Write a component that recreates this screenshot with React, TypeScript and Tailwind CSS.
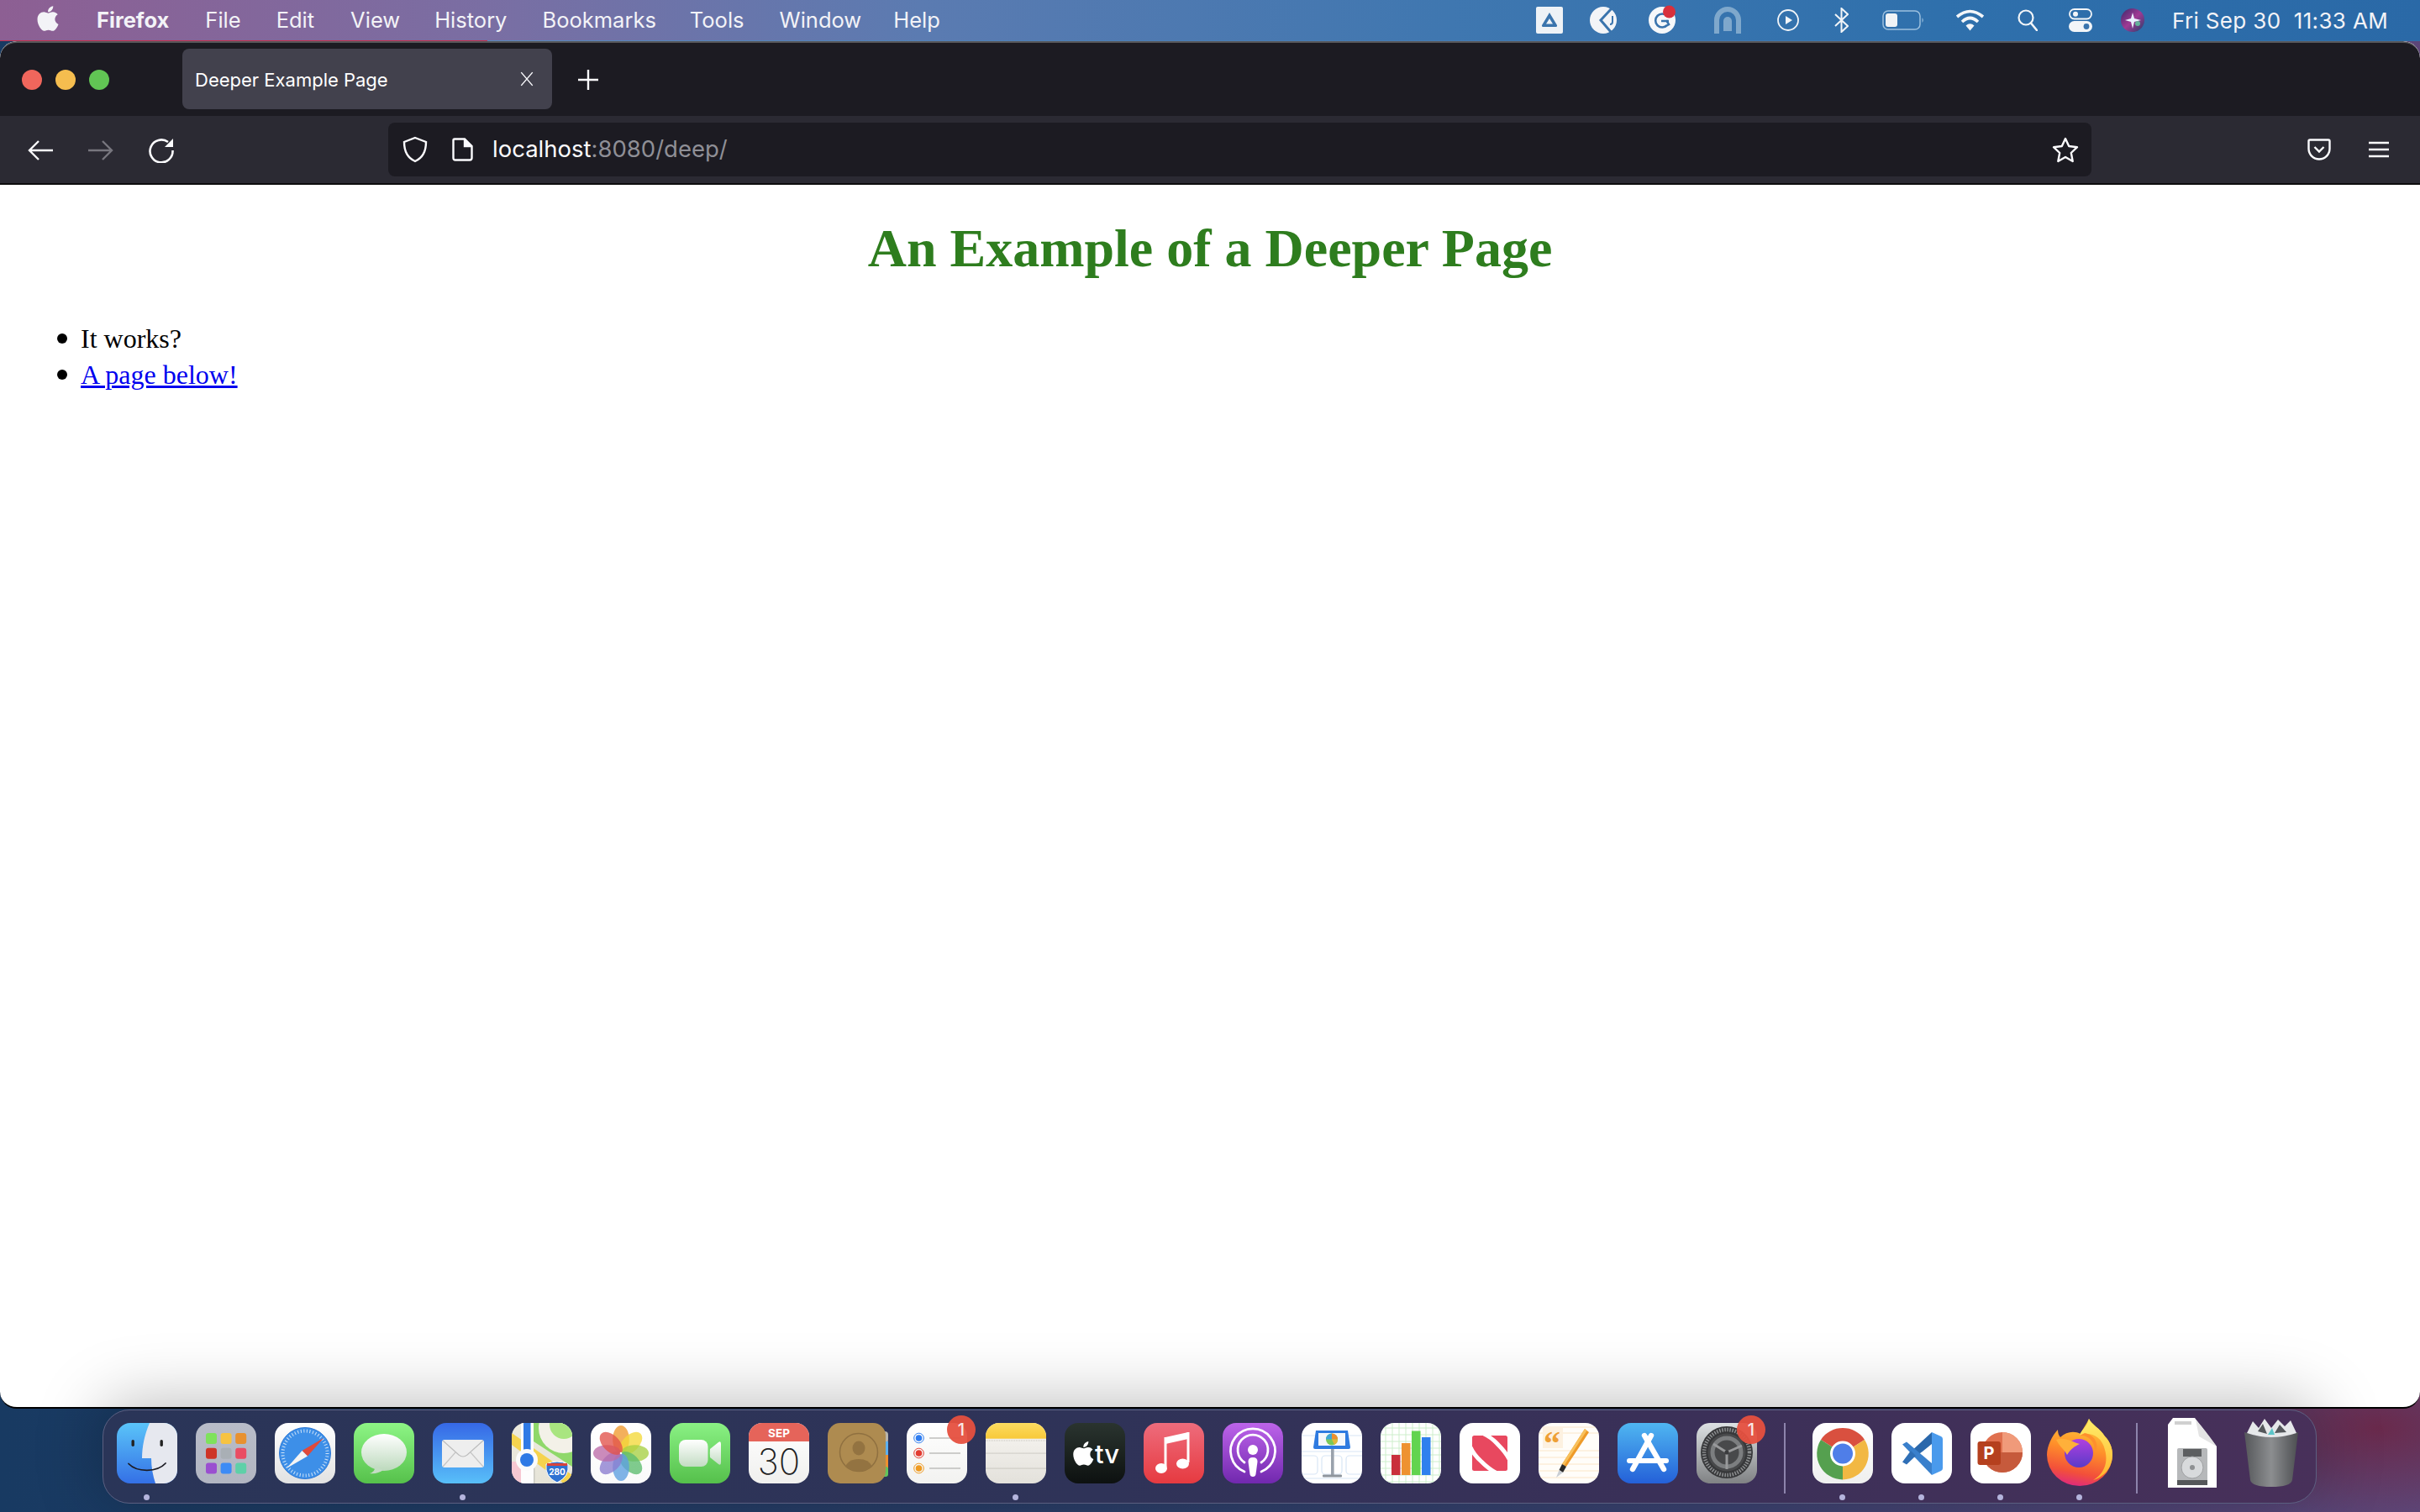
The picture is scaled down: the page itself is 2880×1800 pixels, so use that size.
import React from 'react';

const APPLE = 'M318.7 268.7c-.2-36.7 16.4-64.4 50-84.8-18.8-26.9-47.2-41.7-84.7-44.6-35.5-2.8-74.3 20.7-88.5 20.7-15 0-49.4-19.7-76.4-19.7C63.3 141.2 4 184.8 4 273.5q0 39.3 14.4 81.2c12.8 36.7 59 126.7 107.2 125.2 25.2-.6 43-17.9 75.8-17.9 31.8 0 48.3 17.9 76.4 17.9 48.6-.7 90.4-82.5 102.6-119.3-65.2-30.7-61.7-90-61.7-91.9zm-56.6-164.2c27.3-32.4 24.8-61.9 24-72.5-24.1 1.4-52 16.4-67.9 34.9-17.5 19.8-27.8 44.3-25.6 71.9 26.1 2 49.9-11.4 69.5-34.3z';

// rounded app tile, everything inside is clipped to it
function Tile({ id, from, to, children }: { id: string; from: string; to: string; children?: React.ReactNode }) {
  return (
    <svg viewBox="0 0 72 72" className="block w-[72px] h-[72px]">
      <defs>
        <linearGradient id={`g-${id}`} x1="0" y1="0" x2="0" y2="1">
          <stop offset="0" stopColor={from} />
          <stop offset="1" stopColor={to} />
        </linearGradient>
        <clipPath id={`c-${id}`}>
          <rect width="72" height="72" rx="16" />
        </clipPath>
      </defs>
      <g clipPath={`url(#c-${id})`}>
        <rect width="72" height="72" fill={`url(#g-${id})`} />
        {children}
      </g>
    </svg>
  );
}

const Finder = () => (
  <Tile id="finder" from="#5ac4f9" to="#3470e6">
    <path d="M39 0 C33 14 30 28 30 42 H41 C41 53 43 63 46 72 H72 V0Z" fill="#e6e8ef" />
    <rect x="17.5" y="20" width="3.4" height="8" rx="1.7" fill="#222" />
    <rect x="51.5" y="20" width="3.4" height="8" rx="1.7" fill="#222" />
    <path d="M14 48.5 C24 59 48 59 58 48" fill="none" stroke="#1c1c24" strokeWidth="1.8" strokeLinecap="round" />
  </Tile>
);

const Launchpad = () => {
  const c = ['#7ee25c', '#f7c342', '#e89130', '#ce3427', '#a9afb5', '#ea4c63', '#9a4fd0', '#3d8bf5', '#5ed0a8'];
  return (
    <Tile id="lp" from="#b8bcc8" to="#b2b6c2">
      {c.map((f, i) => (
        <rect key={f} x={12 + (i % 3) * 17.6} y={12 + Math.floor(i / 3) * 17.8} width="13" height="13" rx="3" fill={f} />
      ))}
    </Tile>
  );
};

const Safari = () => (
  <Tile id="safari" from="#ffffff" to="#e2e2e2">
    <circle cx="36" cy="36" r="30.5" fill="#3d8fe8" stroke="#2f78d4" strokeWidth="1" />
    <circle cx="36" cy="36" r="26.5" fill="none" stroke="#cfe3f8" strokeWidth="4" strokeDasharray="1 2.6" />
    <polygon points="58,18 32.5,33 39,39.5" fill="#e0493a" />
    <polygon points="14,54 32.5,33 39,39.5" fill="#f4f4f4" />
  </Tile>
);

const Messages = () => (
  <Tile id="msg" from="#8df585" to="#56c14b">
    <defs>
      <linearGradient id="msg-b" x1="0" y1="0" x2="0" y2="1">
        <stop offset="0" stopColor="#ffffff" />
        <stop offset="1" stopColor="#bcd9bc" />
      </linearGradient>
    </defs>
    <ellipse cx="36" cy="35" rx="27" ry="22" fill="url(#msg-b)" />
    <path d="M26 52 C25 56 23 59 19 60 C25 61 31 59 35 56Z" fill="#c4dcc4" />
  </Tile>
);

const Mail = () => (
  <Tile id="mail" from="#3668e6" to="#58bff9">
    <rect x="11" y="20" width="50" height="33" rx="3" fill="#eeeeee" />
    <path d="M12 21 L31 38 Q36 42 41 38 L60 21" fill="none" stroke="#bdbdbd" strokeWidth="1.2" />
    <path d="M12 52 L27 35 M60 52 L45 35" fill="none" stroke="#c6c6c6" strokeWidth="1.2" />
  </Tile>
);

const Maps = () => (
  <Tile id="maps" from="#eceade" to="#e6e4d8">
    <path d="M26 0 H72 V52 L26 22 Z" fill="#8fd86a" />
    <circle cx="62" cy="6" r="30" fill="#f3f1e8" />
    <circle cx="62" cy="2" r="17" fill="#a9e580" />
    <path d="M0 12 L72 62 V72 H62 L0 26Z" fill="#f5d34e" />
    <rect x="0" y="46" width="11" height="26" fill="#f7c8d2" />
    <rect x="11" y="0" width="15" height="72" fill="#fdfdfd" />
    <rect x="26" y="46" width="1.5" height="26" fill="#c9c9c2" />
    <rect x="14" y="0" width="8.5" height="36" fill="#2f7ae5" />
    <circle cx="18" cy="44" r="13" fill="#fbfbfb" />
    <circle cx="18" cy="44" r="8" fill="#2f7ae5" />
    <path d="M41 49 Q54 43 67 49 Q69 64 54 71 Q39 64 41 49Z" fill="#2f72d2" stroke="#fff" strokeWidth="1" />
    <rect x="42" y="48" width="24" height="3" fill="#d9433a" />
    <text x="54" y="62" textAnchor="middle" fontSize="10" fontWeight="700" fill="#fff" fontFamily="Inter, sans-serif">280</text>
  </Tile>
);

const Photos = () => {
  const petals = ['#f09a2e', '#f3d83a', '#a6cf42', '#5cbd6e', '#5c9fe0', '#8a7ccf', '#bd6aa8', '#e2524a'];
  return (
    <Tile id="photos" from="#ffffff" to="#fafafa">
      {petals.map((f, i) => (
        <ellipse key={f} cx="36" cy="19.5" rx="9.8" ry="16.5" fill={f} fillOpacity="0.78" transform={`rotate(${i * 45} 36 36)`} />
      ))}
      <circle cx="36" cy="36" r="1.3" fill="#fff" />
    </Tile>
  );
};

const FaceTime = () => (
  <Tile id="ft" from="#8af184" to="#55c04b">
    <defs>
      <linearGradient id="ft-b" x1="0" y1="0" x2="0" y2="1">
        <stop offset="0" stopColor="#ffffff" />
        <stop offset="1" stopColor="#c3dcc3" />
      </linearGradient>
    </defs>
    <rect x="11" y="20" width="34.5" height="32" rx="8" fill="url(#ft-b)" />
    <path d="M48 31 L58 23 Q61 21 61 25 V47 Q61 51 58 49 L48 41 Q47.5 36 48 31Z" fill="url(#ft-b)" />
  </Tile>
);

const Calendar = () => (
  <Tile id="cal" from="#ffffff" to="#f0f0ee">
    <rect width="72" height="22" fill="#e5645a" />
    <text x="36" y="17" textAnchor="middle" fontSize="13.5" fontWeight="700" fill="#fff" fontFamily="Inter, sans-serif">SEP</text>
    <text x="36" y="61" textAnchor="middle" fontSize="42" fontWeight="200" fill="#222" fontFamily="Inter, sans-serif">30</text>
  </Tile>
);

const Contacts = () => (
  <div className="relative w-[72px] h-[72px]">
    <svg viewBox="0 0 72 72" className="block w-[72px] h-[72px]">
      <rect x="58" y="10" width="14" height="14" rx="4" fill="#b9b5ad" />
      <rect x="62" y="22" width="10" height="16" fill="#5cb0f0" />
      <rect x="62" y="38" width="10" height="16" fill="#ee9030" />
      <rect x="62" y="52" width="10" height="12" rx="3" fill="#62c45c" />
      <rect width="69" height="72" rx="15" fill="#ae8b50" />
      <circle cx="37" cy="35" r="22.5" fill="none" stroke="#8f7040" strokeWidth="1.5" />
      <ellipse cx="37" cy="30" rx="7.5" ry="8.5" fill="#937341" />
      <path d="M21 52 Q25 43 37 43 Q49 43 53 52 Q46 57.5 37 57.5 Q28 57.5 21 52Z" fill="#937341" />
    </svg>
  </div>
);

const Reminders = () => (
  <Tile id="rem" from="#ffffff" to="#f2f2f0">
    {[['#2f7df0', 18], ['#e23c32', 36], ['#ef9a20', 54]].map(([f, y]) => (
      <g key={String(f)}>
        <circle cx="14.5" cy={y} r="5.8" fill="none" stroke={String(f)} strokeWidth="1" />
        <circle cx="14.5" cy={y} r="3.8" fill={String(f)} />
        <rect x="27" y={Number(y) - 0.8} width="37" height="1.6" fill="#c2c2c0" />
      </g>
    ))}
  </Tile>
);

const Notes = () => (
  <Tile id="notes" from="#f8f6f2" to="#e3e1db">
    <defs>
      <linearGradient id="notes-t" x1="0" y1="0" x2="0" y2="1">
        <stop offset="0" stopColor="#fcdc60" />
        <stop offset="1" stopColor="#f8c93a" />
      </linearGradient>
    </defs>
    <rect width="72" height="18.7" fill="url(#notes-t)" />
    <line x1="0" y1="21" x2="72" y2="21" stroke="#c4c2bc" strokeWidth="1" strokeDasharray="1 1" />
    <rect y="35.5" width="72" height="1.2" fill="#d2d0ca" />
    <rect y="53.5" width="72" height="1.2" fill="#cfcdc7" />
  </Tile>
);

const AppleTv = () => (
  <Tile id="tv" from="#2a342f" to="#0d1110">
    <path d={APPLE} fill="#fff" transform="translate(10 20) scale(0.064)" />
    <text x="36" y="48" fontSize="31" fontWeight="500" fill="#fff" fontFamily="Inter, sans-serif">tv</text>
  </Tile>
);

const Music = () => (
  <Tile id="music" from="#ee6c7c" to="#e63a40">
    <path d="M26 25 L53 19 V11 L26 17 Z" fill="#fff" />
    <path d="M26 17 V52 M53 11 V47" stroke="#fff" strokeWidth="3" fill="none" />
    <ellipse cx="21" cy="54" rx="7" ry="6" fill="#fff" />
    <ellipse cx="46.5" cy="48.5" rx="7.5" ry="6" fill="#fff" />
  </Tile>
);

const Podcasts = () => (
  <Tile id="pod" from="#bd64ea" to="#7128ae">
    <path d="M26 58 A26.5 26.5 0 1 1 46 58" fill="none" stroke="#fff" strokeWidth="2.8" strokeLinecap="round" />
    <path d="M26 47 A18 18 0 1 1 46 47" fill="none" stroke="#fff" strokeWidth="2.8" strokeLinecap="round" />
    <circle cx="36" cy="32" r="6" fill="#fff" />
    <path d="M30.5 46 Q30.5 41 36 41 Q41.5 41 41.5 46 L39.5 61 Q39 64 36 64 Q33 64 32.5 61Z" fill="#fff" />
  </Tile>
);

const Keynote = () => (
  <Tile id="key" from="#ffffff" to="#ffffff">
    <g fill="none" stroke="#d8e6f5" strokeWidth="1.2">
      <rect x="-8" y="39" width="27" height="22" rx="4" />
      <rect x="24" y="39" width="24" height="22" rx="4" />
      <rect x="53" y="39" width="28" height="22" rx="4" />
      <path d="M0 15 H72 M0 34 H72 M0 66 H72" />
    </g>
    <rect x="35" y="29" width="3.6" height="33" fill="#9aa2ac" />
    <rect x="25" y="61.5" width="23" height="3" rx="1" fill="#8f969e" />
    <path d="M17 9 H55 L58 29 Q58 31 56 31 H16 Q14 31 14 29Z" fill="#2f7be0" />
    <rect x="20" y="12" width="32" height="15" fill="#f4f7fb" />
    <circle cx="36" cy="19.5" r="7" fill="#7ac85a" />
    <path d="M36 19.5 V12.5 A7 7 0 0 1 43 19.5Z" fill="#ef8f2f" />
    <path d="M36 19.5 H43 A7 7 0 0 1 39 26Z" fill="#e2b93a" />
    <path d="M36 19.5 V12.5 A7 7 0 0 0 29 19.5Z" fill="#3fa6d8" />
  </Tile>
);

const NumbersApp = () => {
  const lines = [6, 14, 22, 30, 38, 46, 54, 62, 70];
  return (
    <Tile id="num" from="#ffffff" to="#ffffff">
      <g stroke="#cdeecb" strokeWidth="1">
        {lines.map((n) => (
          <g key={n}>
            <line x1={n} y1="0" x2={n} y2="72" />
            <line x1="0" y1={n} x2="72" y2={n} />
          </g>
        ))}
      </g>
      <rect x="13" y="38" width="10.5" height="24" fill="#c9303c" />
      <rect x="25" y="24" width="10.5" height="38" fill="#ee9230" />
      <rect x="37" y="9.5" width="10.5" height="52.5" fill="#62d44f" />
      <rect x="49" y="17" width="10.5" height="45" fill="#2f80ee" />
    </Tile>
  );
};

const News = () => (
  <Tile id="news" from="#ffffff" to="#ffffff">
    <rect x="15" y="15" width="42" height="42" rx="2.5" fill="#e8485f" />
    <path d="M29 13 Q38 17 46 26 Q55 35 59 43" fill="none" stroke="#fff" strokeWidth="5" />
    <path d="M13 29 Q17 38 26 46 Q35 55 43 59" fill="none" stroke="#fff" strokeWidth="5" />
  </Tile>
);

const Pages = () => (
  <Tile id="pages" from="#fffdf9" to="#fffdf9">
    <g stroke="#fbe6c8" strokeWidth="1">
      {[5, 12, 33, 41, 49, 57, 65].map((y) => (
        <line key={y} x1="0" y1={y} x2="72" y2={y} />
      ))}
    </g>
    <rect x="5" y="6" width="24" height="24" fill="#fdf1e0" />
    <text x="6" y="38" fontSize="40" fontWeight="700" fill="#ee9f35" fontFamily="Liberation Serif, serif">“</text>
    <path d="M55 7 L60 11 L33 52 L28 49Z" fill="#ee9a28" />
    <path d="M55 7 L57.5 9 L30.5 50.5 L28 49Z" fill="#f8c15c" />
    <path d="M28 49 L33 52 L29 59 L24.5 56Z" fill="#2a2a2a" />
    <path d="M24.5 56 L29 59 L21 65Z" fill="#c9ced4" />
  </Tile>
);

const AppStore = () => (
  <Tile id="as" from="#4fb6f1" to="#2460d8">
    <g stroke="#fff" strokeWidth="6.4" strokeLinecap="round">
      <line x1="32" y1="15" x2="55" y2="55" />
      <line x1="40" y1="15" x2="18" y2="55" />
    </g>
    <line x1="14" y1="45" x2="58" y2="45" stroke="#fff" strokeWidth="6" strokeLinecap="round" />
  </Tile>
);

const Settings = () => (
  <Tile id="set" from="#dde1e3" to="#808284">
    <circle cx="36" cy="35" r="31" fill="#37383a" />
    <circle cx="36" cy="35" r="27" fill="none" stroke="#8d8f91" strokeWidth="4.5" strokeDasharray="1.5 1.6" />
    <circle cx="36" cy="35" r="22.5" fill="#48494b" />
    <circle cx="36" cy="35" r="17" fill="none" stroke="#7c7e80" strokeWidth="5" />
    <g stroke="#98999b" strokeWidth="3">
      <line x1="36" y1="35" x2="54" y2="27" />
      <line x1="36" y1="35" x2="20" y2="25" />
      <line x1="36" y1="35" x2="36" y2="55" />
    </g>
    <circle cx="36" cy="35" r="2.6" fill="#3a3b3d" />
  </Tile>
);

const Chrome = () => (
  <Tile id="chrome" from="#ffffff" to="#efefef">
    <path d="M36 36.5 L62 20 A31 31 0 0 0 10 20Z" fill="#d9503f" />
    <path d="M36 36.5 L62 20 A31 31 0 0 1 36 67.5Z" fill="#f2b843" />
    <path d="M36 36.5 L36 67.5 A31 31 0 0 1 10 20Z" fill="#55a04f" />
    <circle cx="36" cy="36.5" r="15" fill="#fff" />
    <circle cx="36" cy="36.5" r="12" fill="#4f7ee8" />
  </Tile>
);

const VsCode = () => (
  <Tile id="code" from="#ffffff" to="#ffffff">
    <path d="M48 11 L22 35 L28 41 L48 25Z" fill="#2a67ab" />
    <path d="M13 25.5 L18 22.5 L48 48 V62 Z" fill="#3a80cc" />
    <path d="M13 46.5 L18 49.5 L29 39 L23 33Z" fill="#2f6fb6" />
    <path d="M48 11 L59 16 Q61 17 61 19 V54 Q61 56 59 57 L48 62Z" fill="#4a9aec" />
  </Tile>
);

const PowerPoint = () => (
  <Tile id="ppt" from="#ffffff" to="#ffffff">
    <circle cx="38" cy="35" r="24" fill="#e0704f" />
    <path d="M38 35 V11 A24 24 0 0 1 62 35Z" fill="#f09a7a" />
    <path d="M14 35 H62 A24 24 0 0 1 14 35Z" fill="#c65a3c" />
    <rect x="8.5" y="22" width="27.5" height="28" rx="3" fill="#b5401e" />
    <text x="22" y="43" textAnchor="middle" fontSize="20" fontWeight="700" fill="#fff" fontFamily="Inter, sans-serif">P</text>
  </Tile>
);

const Firefox = () => (
  <svg viewBox="-4 -6 80 82" className="absolute left-[-4px] top-[-6px] w-[80px] h-[82px] overflow-visible">
    <defs>
      <linearGradient id="ff-a" x1="0.6" y1="0" x2="0.4" y2="1">
        <stop offset="0" stopColor="#ffd23c" />
        <stop offset="0.45" stopColor="#ff8f2a" />
        <stop offset="0.8" stopColor="#f2503a" />
        <stop offset="1" stopColor="#e02a7c" />
      </linearGradient>
      <linearGradient id="ff-p" x1="0.5" y1="0" x2="0.5" y2="1">
        <stop offset="0" stopColor="#b040e0" />
        <stop offset="1" stopColor="#5a3bc8" />
      </linearGradient>
      <linearGradient id="ff-y" x1="0.5" y1="0" x2="0.5" y2="1">
        <stop offset="0" stopColor="#ffee6a" />
        <stop offset="1" stopColor="#ffb42c" />
      </linearGradient>
    </defs>
    <path d="M-3 38 C-3 28 3 15 10 8 C10 12 11 15 13 17 C20 10 30 9 37 13 C40 6 44 2 47 -5 C50 2 60 6 66 16 C72 22 75 30 75 38 A39 37 0 0 1 -3 38Z" fill="url(#ff-a)" />
    <path d="M47 -5 C46 4 36 10 36 15 C46 10 62 14 66 32 C70 46 66 60 52 68 C66 64 75 52 75 38 C75 30 72 22 66 16 C60 6 50 2 47 -5Z" fill="url(#ff-y)" />
    <circle cx="35" cy="36" r="17" fill="url(#ff-p)" />
    <path d="M8 20 C18 16 26 22 36 25 C30 28 26 30 21 38 C18 32 12 28 8 20Z" fill="#ffb03a" />
    <path d="M36 15 C46 14 55 22 54 36 C60 26 54 14 42 12Z" fill="#ff8f2e" />
  </svg>
);

const DiskFile = () => (
  <svg viewBox="0 0 58 83" className="absolute left-[5px] top-[-6px] w-[58px] h-[83px] overflow-visible">
    <path d="M0 8 L6 0 H32 L58 34 V83 H0Z" fill="#fff" />
    <path d="M33 2 L37 22 L58 34 Q44 14 33 2Z" fill="#e4e4e4" />
    <path d="M8 4 H28 V8 H8Z" fill="#d0d0d0" />
    <rect x="11" y="36" width="36" height="44" rx="2" fill="#b6b8ba" />
    <rect x="18" y="37" width="22" height="9" fill="#5c5e60" />
    <circle cx="29" cy="59" r="13" fill="#d8dadc" stroke="#9ea0a2" strokeWidth="1" />
    <circle cx="29" cy="59" r="3" fill="#8e9092" />
    <rect x="11" y="74" width="36" height="6" fill="#55575a" />
  </svg>
);

const Trash = () => (
  <svg viewBox="0 0 64 82" className="absolute left-[2px] top-[-6px] w-[64px] h-[82px] overflow-visible">
    <defs>
      <linearGradient id="tr" x1="0" y1="0" x2="1" y2="0">
        <stop offset="0" stopColor="#55575a" />
        <stop offset="0.5" stopColor="#8c8e90" />
        <stop offset="1" stopColor="#4c4e51" />
      </linearGradient>
    </defs>
    <path d="M0 17 Q32 28 64 17 L57 74 Q55 82 32 82 Q9 82 7 74Z" fill="url(#tr)" />
    <path d="M3 18 L10 4 L17 12 L24 1 L32 12 L40 2 L48 10 L55 3 L62 18 Q32 28 3 18Z" fill="#e6e8ea" />
    <path d="M16 16 L22 7 L27 19Z M36 18 L42 8 L50 17Z" fill="#55585c" />
    <path d="M28 20 L33 12 L36 20Z" fill="#5cc4c8" />
  </svg>
);

function Slot({ running, badge, children }: { running?: boolean; badge?: boolean; children: React.ReactNode }) {
  return (
    <div className="relative w-[72px] h-[73px] shrink-0">
      {children}
      {badge && (
        <span className="absolute left-[48px] top-[-9px] w-[34px] h-[34px] rounded-full bg-[#e6503f]/95 flex items-center justify-center text-[20px] font-medium text-[#f8e9e6]">1</span>
      )}
      {running && <span className="absolute left-[32px] top-[85px] w-[7px] h-[7px] rounded-full bg-[#b4b4dc]" />}
    </div>
  );
}

function MenuIcons() {
  return (
    <>
      <svg viewBox="0 0 32 32" className="w-[32px] h-[32px] mr-[32px]">
        <rect width="32" height="32" rx="2" fill="#eef2f6" />
        <path d="M16 7 L25 22 Q25.5 24 23 24 H9 Q6.5 24 7 22Z M16 14 L12 20.5 H20Z" fill="#3a74ad" fillRule="evenodd" />
      </svg>
      <svg viewBox="0 0 32 32" className="w-[32px] h-[32px] mr-[38px]">
        <circle cx="16" cy="16" r="16" fill="#f2f4f7" />
        <path d="M26 2 L13 16 L25 30" fill="none" stroke="#3a74ad" strokeWidth="3" />
        <path d="M27 11 V18 Q27 21 24 21" fill="none" stroke="#3a74ad" strokeWidth="2" />
      </svg>
      <svg viewBox="0 0 34 34" className="w-[34px] h-[34px] mr-[44px] overflow-visible">
        <circle cx="16" cy="17" r="16" fill="#f6f8fa" />
        <path d="M22 12 A8 8 0 1 0 22 23 M15 18 H24 M19 25 L24 22 L21 17" fill="none" stroke="#3a74ad" strokeWidth="2.6" />
        <circle cx="24.5" cy="7" r="7.5" fill="#d8303c" />
      </svg>
      <svg viewBox="0 0 32 32" className="w-[32px] h-[32px] mr-[43px]">
        <path d="M3 32 V16 A13 13 0 0 1 29 16 V32" fill="none" stroke="#7fa8cc" strokeWidth="6" />
        <path d="M11 29 V17 A5 5 0 0 1 21 17 V29Z" fill="#7fa8cc" />
      </svg>
      <svg viewBox="0 0 26 26" className="w-[26px] h-[26px] mr-[42px]">
        <circle cx="13" cy="13" r="12" fill="none" stroke="#f2f5f8" strokeWidth="1.8" />
        <path d="M10 8 L18 13 L10 18Z" fill="#f2f5f8" />
      </svg>
      <svg viewBox="0 0 17 30" className="w-[17px] h-[30px] mr-[40px]">
        <path d="M1 8 L16 22 L8.5 29 V1 L16 8 L1 22" fill="none" stroke="#f2f5f8" strokeWidth="2" />
      </svg>
      <svg viewBox="0 0 50 24" className="w-[50px] h-[24px] mr-[37px]">
        <rect x="1" y="1" width="44" height="22" rx="6" fill="none" stroke="#9cc0de" strokeWidth="1.5" />
        <rect x="4" y="4" width="14" height="16" rx="3" fill="#f0f3f6" />
        <path d="M47.5 9 Q50 12 47.5 15Z" fill="#9cc0de" />
      </svg>
      <svg viewBox="0 0 35 26" className="w-[35px] h-[26px] mr-[39px]">
        <path d="M2 9 Q17.5 -4 33 9 M8 15 Q17.5 6 27 15" fill="none" stroke="#f4f6f9" strokeWidth="3.6" />
        <path d="M12.5 19.5 Q17.5 15 22.5 19.5 L17.5 25.5Z" fill="#f4f6f9" />
      </svg>
      <svg viewBox="0 0 24 26" className="w-[24px] h-[26px] mr-[37px]">
        <circle cx="10" cy="10" r="8.5" fill="none" stroke="#f2f5f8" strokeWidth="2.2" />
        <line x1="16" y1="16.5" x2="23" y2="25" stroke="#f2f5f8" strokeWidth="2.6" strokeLinecap="round" />
      </svg>
      <svg viewBox="0 0 28 28" className="w-[28px] h-[28px] mr-[34px]">
        <rect x="1" y="1" width="26" height="11.5" rx="5.7" fill="none" stroke="#f2f5f8" strokeWidth="1.8" />
        <circle cx="8" cy="6.7" r="3" fill="#f2f5f8" />
        <rect y="15" width="28" height="13" rx="6.5" fill="#f2f5f8" />
        <circle cx="21" cy="21.5" r="3.4" fill="#3a74ad" />
      </svg>
      <svg viewBox="0 0 28 28" className="w-[28px] h-[28px] mr-[33px]">
        <defs>
          <linearGradient id="siri" x1="0" y1="0" x2="1" y2="1">
            <stop offset="0" stopColor="#3a2a6a" />
            <stop offset="0.5" stopColor="#a03a94" />
            <stop offset="1" stopColor="#24406a" />
          </linearGradient>
        </defs>
        <circle cx="14" cy="14" r="14" fill="url(#siri)" />
        <path d="M14 5 L16 12 L24 14 L16 16 L14 24 L12 16 L5 14 L12 12Z" fill="#eaf2ff" />
        <circle cx="20" cy="18" r="3" fill="#5fd0a0" fillOpacity="0.8" />
      </svg>
    </>
  );
}

export default function App() {
  return (
    <div className="flex flex-col w-[2880px] h-[1800px] overflow-hidden font-['Inter',sans-serif] bg-[radial-gradient(220px_110px_at_2830px_1700px,#6a2a4c_0%,transparent_100%),linear-gradient(90deg,#183a62_0%,#2b3e68_45%,#3a4270_70%,#5c4678_100%)]">
      {/* menu bar */}
      <div className="flex items-center justify-between h-[48px] shrink-0 text-[25.5px] text-[#f3f3f7] bg-[linear-gradient(90deg,#8d5f93_0%,#7a6ea3_20%,#5b7bb1_38%,#3f77b0_60%,#2f70ac_80%,#2a69a7_100%)]">
        <div className="flex items-center">
          <svg viewBox="0 0 384 512" className="w-[28px] h-[34px] ml-[43px] mr-[44px] mb-[4px]" fill="#f3f3f7">
            <path d={APPLE} />
          </svg>
          <span className="font-bold mr-[43px]">Firefox</span>
          <span className="mr-[42px]">File</span>
          <span className="mr-[43px]">Edit</span>
          <span className="mr-[41px]">View</span>
          <span className="mr-[42px]">History</span>
          <span className="mr-[40px]">Bookmarks</span>
          <span className="mr-[42px]">Tools</span>
          <span className="mr-[38px]">Window</span>
          <span>Help</span>
        </div>
        <div className="flex items-center pr-[38px]">
          <MenuIcons />
          <span className="whitespace-pre text-[26px] tracking-[0.35px]">Fri Sep 30  11:33 AM</span>
        </div>
      </div>
      <div className="h-[1px] shrink-0 bg-[linear-gradient(90deg,#c0304f_0,#c0304f_580px,#5a88bd_580px,#2f6ea8_100%)]" />

      {/* browser window */}
      <div className="flex flex-col h-[1628px] shrink-0 rounded-[20px] overflow-hidden bg-white border-b-[2px] border-black">
        <div className="flex items-center h-[89px] shrink-0 bg-[#1c1b22] border-t-[2px] border-[#58585c] rounded-t-[20px]">
          <span className="w-[24px] h-[24px] rounded-full bg-[#f0665c] ml-[26px]" />
          <span className="w-[24px] h-[24px] rounded-full bg-[#f5bd4f] ml-[16px]" />
          <span className="w-[24px] h-[24px] rounded-full bg-[#61c554] ml-[16px]" />
          <div className="flex items-center justify-between w-[440px] h-[72px] ml-[87px] mt-[-2px] pl-[15px] pr-[21px] rounded-[8px] bg-[#42414d] text-[22px] text-white">
            <span className="pt-[3px]">Deeper Example Page</span>
            <svg viewBox="0 0 16 16" className="w-[18px] h-[18px]" fill="none" stroke="#fbfbfe" strokeWidth="1.3">
              <path d="M2 1 L14 15 M14 1 L2 15" />
            </svg>
          </div>
          <svg viewBox="0 0 24 24" className="w-[24px] h-[24px] ml-[31px]" fill="none" stroke="#fbfbfe" strokeWidth="2.4">
            <path d="M12 0 V24 M0 12 H24" />
          </svg>
        </div>
        <div className="flex items-center h-[80px] shrink-0 bg-[#2b2a33]">
          <svg viewBox="0 0 30 24" className="w-[30px] h-[24px] ml-[33px] mt-[2px]" fill="none" stroke="#fbfbfe" strokeWidth="2.4">
            <path d="M30 12 H2 M13 1 L2 12 L13 23" />
          </svg>
          <svg viewBox="0 0 30 24" className="w-[30px] h-[24px] ml-[42px] mt-[2px]" fill="none" stroke="#77767e" strokeWidth="2.4">
            <path d="M0 12 H28 M17 1 L28 12 L17 23" />
          </svg>
          <svg viewBox="0 0 30 30" className="w-[30px] h-[30px] ml-[42px] mt-[2px]" fill="none" stroke="#fbfbfe" strokeWidth="2.6">
            <path d="M23 5 A13.5 13.5 0 1 0 28.5 15" />
            <path d="M29 1 V11 H19Z" fill="#fbfbfe" stroke="none" />
          </svg>
          <div className="flex items-center justify-between w-[2027px] h-[64px] ml-[255px] rounded-[8px] bg-[#1c1b22] pl-[17px] pr-[15px]">
            <div className="flex items-center">
              <svg viewBox="0 0 30 32" className="w-[30px] h-[32px]" fill="none" stroke="#fbfbfe" strokeWidth="2.4">
                <path d="M15 2 L28 7 C28 18 24 26 15 30 C6 26 2 18 2 7Z" />
              </svg>
              <svg viewBox="0 0 25 28" className="w-[25px] h-[28px] ml-[29px]" fill="none" stroke="#fbfbfe" strokeWidth="2.4">
                <path d="M3 1.5 H15 L23.5 10 V24 Q23.5 26.5 21 26.5 H4 Q1.5 26.5 1.5 24 V3 Q1.5 1.5 3 1.5Z" />
                <path d="M15 1.5 V10 H23.5" fill="#fbfbfe" />
              </svg>
              <span className="ml-[23px] text-[27.5px] text-[#fbfbfe]">localhost<span className="text-[#8f8f96]">:8080/deep/</span></span>
            </div>
            <svg viewBox="0 0 32 31" className="w-[32px] h-[31px]" fill="none" stroke="#fbfbfe" strokeWidth="2.4" strokeLinejoin="round">
              <path d="M16 2 L20.2 11 L30 12.2 L22.8 19 L24.7 29 L16 24 L7.3 29 L9.2 19 L2 12.2 L11.8 11Z" />
            </svg>
          </div>
          <svg viewBox="0 0 28 26" className="w-[28px] h-[26px] ml-[257px]" fill="none" stroke="#fbfbfe" strokeWidth="2.4">
            <path d="M3 1.5 H25 Q26.5 1.5 26.5 3 V12 A12.5 12.5 0 0 1 1.5 12 V3 Q1.5 1.5 3 1.5Z" />
            <path d="M8.5 10 L14 15.5 L19.5 10" />
          </svg>
          <svg viewBox="0 0 24 20" className="w-[24px] h-[20px] ml-[45px]" fill="none" stroke="#fbfbfe" strokeWidth="2.4">
            <path d="M0 2 H24 M0 10 H24 M0 18 H24" />
          </svg>
        </div>
        <div className="h-[2px] shrink-0 bg-[#0c0c0d]" />

        {/* page */}
        <div className="flex-1 font-['Liberation_Serif',serif] text-black">
          <h1 className="mt-[28px] text-center text-[64px] font-bold text-[#2e7d1e]">An Example of a Deeper Page</h1>
          <ul className="mt-[38px] pl-[96px] list-none text-[32px] leading-[43px]">
            <li className="relative">
              <span className="absolute left-[-28px] top-[15px] w-[12px] h-[12px] rounded-full bg-black" />
              It works?
            </li>
            <li className="relative">
              <span className="absolute left-[-28px] top-[15px] w-[12px] h-[12px] rounded-full bg-black" />
              <a href="#below" className="text-[#0000ee] underline">A page below!</a>
            </li>
          </ul>
        </div>
      </div>

      {/* dock */}
      <div className="flex items-start h-[112px] w-[2635px] ml-[122px] mt-[1px] pl-[16px] pt-[15px] gap-[22px] rounded-[32px] border border-[#5b5f80] shadow-[0_-8px_80px_rgba(0,0,0,0.27)] bg-[linear-gradient(90deg,#2a3558_0%,#2f3358_45%,#3a3058_70%,#48305a_100%)]">
        <Slot running><Finder /></Slot>
        <Slot><Launchpad /></Slot>
        <Slot><Safari /></Slot>
        <Slot><Messages /></Slot>
        <Slot running><Mail /></Slot>
        <Slot><Maps /></Slot>
        <Slot><Photos /></Slot>
        <Slot><FaceTime /></Slot>
        <Slot><Calendar /></Slot>
        <Slot><Contacts /></Slot>
        <Slot badge><Reminders /></Slot>
        <Slot running><Notes /></Slot>
        <Slot><AppleTv /></Slot>
        <Slot><Music /></Slot>
        <Slot><Podcasts /></Slot>
        <Slot><Keynote /></Slot>
        <Slot><NumbersApp /></Slot>
        <Slot><News /></Slot>
        <Slot><Pages /></Slot>
        <Slot><AppStore /></Slot>
        <Slot badge><Settings /></Slot>
        <div className="w-[2px] h-[84px] mx-[10px] shrink-0 bg-[#8d84ac]" />
        <Slot running><Chrome /></Slot>
        <Slot running><VsCode /></Slot>
        <Slot running><PowerPoint /></Slot>
        <Slot running><Firefox /></Slot>
        <div className="w-[2px] h-[84px] mx-[9px] shrink-0 bg-[#8d84ac]" />
        <Slot><DiskFile /></Slot>
        <Slot><Trash /></Slot>
      </div>
    </div>
  );
}
